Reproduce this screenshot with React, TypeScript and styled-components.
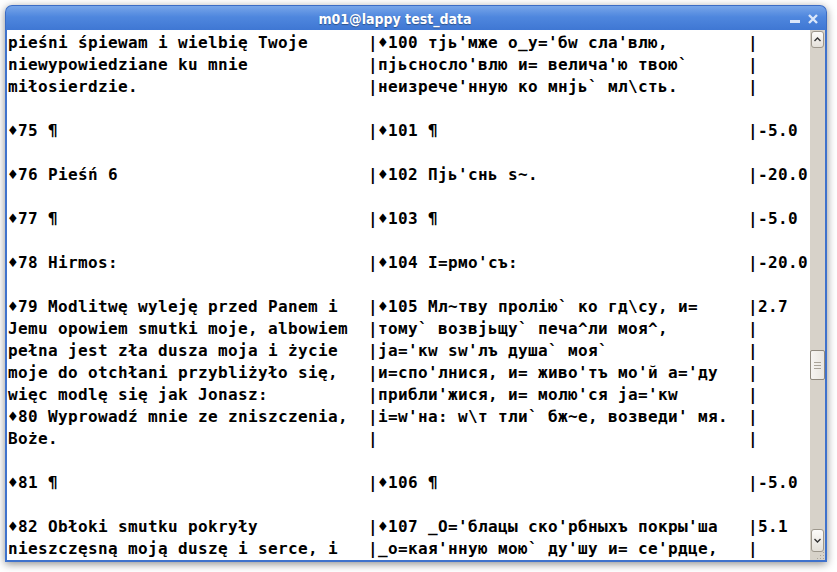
import styled, { createGlobalStyle } from "styled-components";

const GlobalStyle = createGlobalStyle`
  html, body {
    margin: 0;
    padding: 0;
    background: #ffffff;
  }
`;

const Desktop = styled.div`
  width: 837px;
  height: 572px;
  padding: 5px 0 0 5px;
  box-sizing: border-box;
`;

const Window = styled.div`
  width: 822px;
  height: 557px;
  display: flex;
  flex-direction: column;
  border-radius: 7px 7px 0 0;
  box-shadow: 0 2px 9px rgba(0, 0, 0, 0.45);
`;

const TitleBar = styled.div`
  height: 25px;
  flex: none;
  display: flex;
  align-items: center;
  box-sizing: border-box;
  padding-top: 1px;
  border: 1px solid #3b6cc4;
  border-bottom: none;
  border-radius: 7px 7px 0 0;
  background: linear-gradient(#77a5e9, #4f87de 45%, #3f77d3);
`;

const Title = styled.div`
  flex: 1;
  text-align: center;
  color: #ffffff;
  font-family: "DejaVu Sans Condensed", "DejaVu Sans", sans-serif;
  font-stretch: condensed;
  font-weight: bold;
  font-size: 14px;
  text-shadow: 0 1px 1px rgba(0, 0, 0, 0.35);
`;

const TitleButtons = styled.div`
  width: 42px;
  flex: none;
  display: flex;
  align-items: center;
  gap: 8px;
  padding-right: 8px;
  box-sizing: border-box;
  justify-content: flex-end;
`;

const Body = styled.div`
  flex: 1;
  display: flex;
  border: 2px solid #3f72cc;
  border-top: none;
  background: #ffffff;
`;

const Screen = styled.div`
  flex: 1;
  padding: 2px 0 0 1px;
  color: #000000;
  font-family: "DejaVu Sans Mono", monospace;
  font-weight: bold;
  font-size: 16px;
  letter-spacing: 0.367px;
`;

const Line = styled.div`
  display: flex;
  height: 22px;
  line-height: 22px;
  white-space: pre;
`;

const Cell = styled.span<{ $cols?: number }>`
  flex: none;
  width: ${(p) => (p.$cols ? `${p.$cols * 10}px` : "auto")};
`;

const Scrollbar = styled.div`
  width: 15px;
  flex: none;
  display: flex;
  flex-direction: column;
  background: #d7d2c9;
`;

const StepButton = styled.div<{ $h: number; $top?: number }>`
  height: ${(p) => p.$h}px;
  margin: ${(p) => p.$top ?? 0}px 1px 0;
  box-sizing: border-box;
  border: 1px solid #9d978c;
  border-radius: 3px;
  background: linear-gradient(#fcfbf9, #e4e0d9);
  display: flex;
  align-items: center;
  justify-content: center;
`;

const Track = styled.div`
  flex: 1;
`;

const Thumb = styled.div<{ $top: number }>`
  margin: ${(p) => p.$top}px 0 0;
  height: 30px;
  box-sizing: border-box;
  border: 1px solid #8f897e;
  border-radius: 2px;
  background: linear-gradient(90deg, #f6f4f1, #e9e6e0);
  display: flex;
  flex-direction: column;
  align-items: center;
  justify-content: center;
  gap: 2px;
`;

const GripLine = styled.span`
  width: 7px;
  height: 1px;
  background: #a9a398;
`;

const ResizeGrip = styled.div`
  height: 8px;
  display: flex;
  justify-content: flex-end;
  align-items: flex-end;
`;

type Row = [string, string, string] | null;

const rows: Row[] = [
  ["pieśni śpiewam i wielbię Twoje", "♦100 тјь'мже о_у='бw сла'влю,", ""],
  ["niewypowiedziane ku mnie", "пјьсносло'влю и= велича'ю твою`", ""],
  ["miłosierdzie.", "неизрече'нную ко мнјь` мл\\сть.", ""],
  null,
  ["♦75 ¶", "♦101 ¶", "-5.0"],
  null,
  ["♦76 Pieśń 6", "♦102 Пјь'снь s~.", "-20.0"],
  null,
  ["♦77 ¶", "♦103 ¶", "-5.0"],
  null,
  ["♦78 Hirmos:", "♦104 I=рмо'съ:", "-20.0"],
  null,
  ["♦79 Modlitwę wyleję przed Panem i", "♦105 Мл~тву пролію` ко гд\\су, и=", "2.7"],
  ["Jemu opowiem smutki moje, albowiem", "тому` возвјьщу` печа^ли моя^,", ""],
  ["pełna jest zła dusza moja i życie", "ja='кw sw'лъ душа` моя`", ""],
  ["moje do otchłani przybliżyło się,", "и=спо'лнися, и= живо'тъ мо'й а='ду", ""],
  ["więc modlę się jak Jonasz:", "прибли'жися, и= молю'ся ja='кw", ""],
  ["♦80 Wyprowadź mnie ze zniszczenia,", "i=w'на: w\\т тли` бж~е, возведи' мя.", ""],
  ["Boże.", "", ""],
  null,
  ["♦81 ¶", "♦106 ¶", "-5.0"],
  null,
  ["♦82 Obłoki smutku pokryły", "♦107 _О='блацы ско'рбныхъ покры'ша", "5.1"],
  ["nieszczęsną moją duszę i serce, i", "_о=кая'нную мою` ду'шу и= се'рдце,", ""],
];

export default function App() {
  return (
    <Desktop>
      <GlobalStyle />
      <Window>
        <TitleBar>
          <Title>m01@lappy test_data</Title>
          <TitleButtons>
            <svg width="10" height="10" viewBox="0 0 10 10">
              <rect x="0" y="6" width="10" height="3" fill="#dbe7fa" />
            </svg>
            <svg width="10" height="10" viewBox="0 0 10 10">
              <path d="M1 1 L9 9 M9 1 L1 9" stroke="#dbe7fa" strokeWidth="2.4" />
            </svg>
          </TitleButtons>
        </TitleBar>
        <Body>
          <Screen>
            {rows.map((row, i) =>
              row ? (
                <Line key={i}>
                  <Cell $cols={36}>{row[0]}</Cell>
                  <Cell $cols={1}>|</Cell>
                  <Cell $cols={37}>{row[1]}</Cell>
                  <Cell $cols={1}>|</Cell>
                  <Cell>{row[2]}</Cell>
                </Line>
              ) : (
                <Line key={i} />
              )
            )}
          </Screen>
          <Scrollbar>
            <StepButton $h={17} $top={1}>
              <svg width="7" height="5" viewBox="0 0 7 5">
                <path d="M0.5 4 L3.5 1 L6.5 4" fill="none" stroke="#333" strokeWidth="1.4" />
              </svg>
            </StepButton>
            <Track>
              <Thumb $top={302}>
                <GripLine />
                <GripLine />
                <GripLine />
              </Thumb>
            </Track>
            <StepButton $h={23}>
              <svg width="7" height="5" viewBox="0 0 7 5">
                <path d="M0.5 1 L3.5 4 L6.5 1" fill="none" stroke="#333" strokeWidth="1.4" />
              </svg>
            </StepButton>
            <ResizeGrip>
              <svg width="9" height="8" viewBox="0 0 9 8">
                <rect x="7" y="0" width="1" height="1" fill="#a9a398" />
                <rect x="4" y="3" width="1" height="1" fill="#a9a398" />
                <rect x="7" y="3" width="1" height="1" fill="#a9a398" />
                <rect x="1" y="6" width="1" height="1" fill="#a9a398" />
                <rect x="4" y="6" width="1" height="1" fill="#a9a398" />
                <rect x="7" y="6" width="1" height="1" fill="#a9a398" />
              </svg>
            </ResizeGrip>
          </Scrollbar>
        </Body>
      </Window>
    </Desktop>
  );
}
